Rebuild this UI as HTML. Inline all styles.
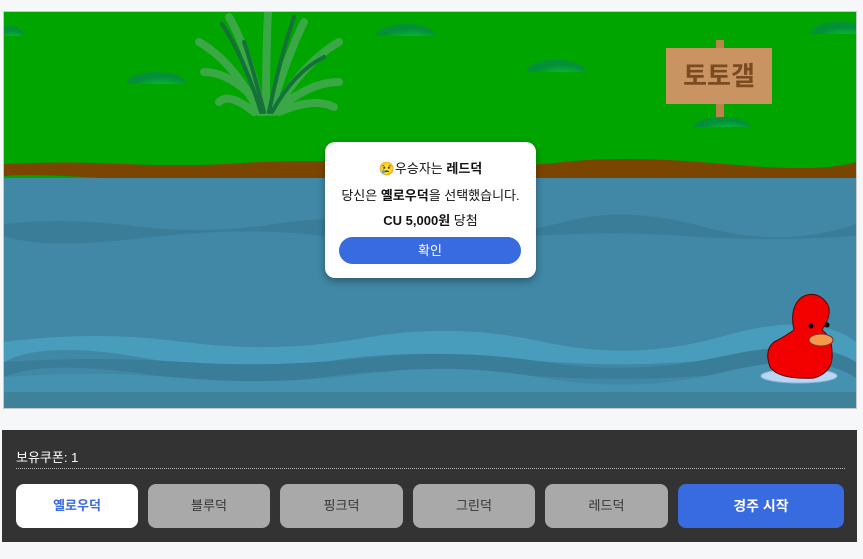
<!DOCTYPE html>
<html><head><meta charset="utf-8"><style>
body{margin:0;width:863px;height:559px;background:#f6f7f9;font-family:"Liberation Sans","Noto Sans CJK KR",sans-serif;position:relative;overflow:hidden}
.game{position:absolute;left:3px;top:11px;width:852px;height:396px;border:1px solid #c8c8c8;background:#00a500;overflow:hidden}
.abs{position:absolute}
.modal{position:absolute;left:325px;top:142px;width:211px;height:136px;background:#fff;border-radius:10px;box-shadow:0 3px 8px rgba(0,0,0,.35);text-align:center;font-size:13px;color:#111}
.modal p{margin:0;position:absolute;left:0;right:0}
.btnok{position:absolute;left:14px;top:95px;width:182px;height:27px;border-radius:14px;background:#386bdf;color:#fff;line-height:27px;font-size:13px}
.panel{position:absolute;left:2px;top:430px;width:855px;height:112px;background:#333}
.b{position:absolute;top:54px;height:44px;border-radius:8px;background:#a9a9a9;color:#333;font-size:13px;text-align:center;line-height:44px}
</style></head><body>
<div class="game">
 <svg class="abs" style="left:0;top:0" width="852" height="396">
  <defs><radialGradient id="g" cx="0.6" cy="0.7"><stop offset="0" stop-color="#08c93a"/><stop offset="1" stop-color="#049038"/></radialGradient></defs>
  <path d="M0 152 Q60 149 120 152 T240 151 T400 152 T560 150 T720 152 T852 150 V168 Q780 165 700 168 T500 167 T300 168 T100 166 T0 168Z" fill="#7a4500"/>
  <rect y="166" width="852" height="230" fill="#4088a6"/>
  <path d="M0 212 Q60 205 130 214 T270 212 T420 214 T560 210 T700 215 T852 212 V224 Q760 230 680 224 T500 226 T320 224 T140 226 T0 224Z" fill="#3a7d98"/>
  <path d="M0 330 Q90 318 180 330 T360 326 T540 330 T720 324 T852 330 V350 Q760 344 680 350 T500 346 T320 350 T140 346 T0 350Z" fill="#489dbd"/>
  <path d="M0 350 Q90 344 180 350 T360 346 T540 350 T720 344 T852 350 V365 Q760 360 680 365 T500 362 T320 365 T140 362 T0 365Z" fill="#3a7d98"/>
  <path d="M0 365 Q90 358 180 366 T360 362 T540 366 T720 360 T852 366 V380 H0Z" fill="#4492b0"/>
  <rect y="380" width="852" height="16" fill="#3e8199"/>
  <ellipse cx="152" cy="72" rx="30" ry="12" fill="url(#g)"/><rect x="110" y="72" width="80" height="14" fill="#00a500"/>
  <ellipse cx="402" cy="24" rx="30" ry="12" fill="url(#g)"/><rect x="360" y="24" width="80" height="14" fill="#00a500"/>
  <ellipse cx="552" cy="60" rx="30" ry="12" fill="url(#g)"/><rect x="510" y="60" width="80" height="14" fill="#00a500"/>
  <ellipse cx="836" cy="22" rx="30" ry="12" fill="url(#g)"/><rect x="800" y="22" width="60" height="14" fill="#00a500"/>
  <ellipse cx="6" cy="24" rx="14" ry="10" fill="url(#g)"/><rect x="0" y="24" width="30" height="14" fill="#00a500"/>
  <g stroke-linecap="round" fill="none">
   <path d="M255 100 Q230 50 195 30 M258 100 Q245 40 225 5 M262 100 Q262 40 264 0 M266 100 Q285 40 300 10 M270 100 Q300 50 335 30 M262 100 Q230 60 200 60 M270 100 Q305 70 335 70 M250 100 Q225 80 215 90 M275 100 Q310 85 330 95" stroke="#3aa845" stroke-width="8"/>
   <path d="M257 100 Q240 45 218 12 M265 100 Q275 50 290 5 M268 100 Q290 60 320 45 M260 100 Q250 60 240 30" stroke="#15703a" stroke-width="4"/>
  </g>
  <rect x="712" y="28" width="8" height="80" fill="#b9834e"/>
  <rect x="662" y="36" width="106" height="56" fill="#c99461"/>
  <text x="715" y="73" font-size="26" font-weight="bold" fill="#7a4a20" text-anchor="middle" font-family="Noto Sans CJK KR,sans-serif">토토갤</text>
  <ellipse cx="718" cy="115" rx="28" ry="10" fill="url(#g)"/><rect x="680" y="115" width="80" height="14" fill="#00a500"/>
  <ellipse cx="795" cy="364" rx="38" ry="7" fill="#b9d7f4" stroke="#8fb3d8"/>
  <path d="M770 330 Q760 338 766 355 Q775 368 810 366 Q830 360 828 340 Q828 325 818 318 Q830 300 822 290 Q812 278 798 285 Q785 295 790 318 Q780 325 770 330Z" fill="#f20000" stroke="#500" stroke-width="1"/>
  <ellipse cx="817" cy="328" rx="12" ry="6" fill="#f59a4a" stroke="#733"/>
  <circle cx="807" cy="314" r="2.5" fill="#000"/><circle cx="823" cy="313" r="2.5" fill="#000"/>
 </svg>
</div>
<div class="modal">
 <p style="top:16px">😢우승자는 <b>레드덕</b></p>
 <p style="top:43px">당신은 <b>옐로우덕</b>을 선택했습니다.</p>
 <p style="top:68px;font-weight:bold">CU 5,000원 <span style="font-weight:normal">당첨</span></p>
 <div class="btnok">확인</div>
</div>
<div class="panel">
 <div class="abs" style="left:14px;top:17px;color:#fff;font-size:13px">보유쿠폰: 1</div>
 <div class="abs" style="left:14px;top:38px;width:829px;border-top:1px dotted #bbb"></div>
 <div class="b" style="left:14px;width:122px;background:#fff;color:#386bdf;font-weight:bold">옐로우덕</div>
 <div class="b" style="left:146px;width:122px">블루덕</div>
 <div class="b" style="left:278px;width:123px">핑크덕</div>
 <div class="b" style="left:411px;width:122px">그린덕</div>
 <div class="b" style="left:543px;width:123px">레드덕</div>
 <div class="b" style="left:676px;width:166px;background:#386bdf;color:#fff;font-weight:bold;font-size:14px">경주 시작</div>
</div>
</body></html>
